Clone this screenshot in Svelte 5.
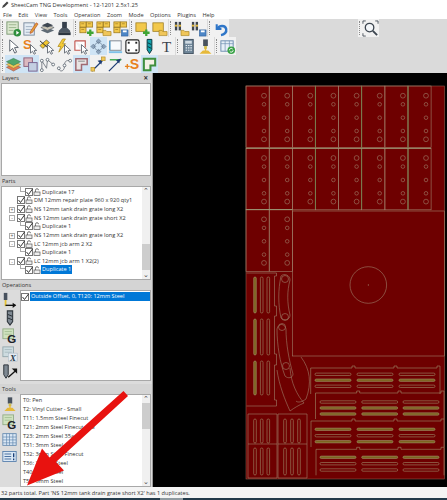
<script>
	const menus = ['File', 'Edit', 'View', 'Tools', 'Operation', 'Zoom', 'Mode', 'Options', 'Plugins', 'Help'];

	const yellow = 'fill="#f2c84b" stroke="#9c7a1c" stroke-width=".8"';
	const grey = 'fill="none" stroke="#7a7f88" stroke-width="1"';
	const cursor = '<path d="M9 7l0 9 2.200-2 1.600 3.200 1.500-.8-1.500-3 2.800-.2z" fill="#fff" stroke="#59616b" stroke-width=".9"/>';
	const plus = '<path d="M13 10v7M9.500 13.500h7" stroke="#3fa535" stroke-width="2.400"/>';
	const folder = '<path d="M8.500 11h3l1 1.200h4.500v4.300h-8.500z" fill="#f0c65a" stroke="#a98422" stroke-width=".7"/>';
	const disk = '<rect x="10" y="10.500" width="7" height="6.500" fill="#4d86c6" stroke="#2a5a94" stroke-width=".6"/><rect x="11.500" y="11" width="4" height="2" fill="#fff"/>';
	const blocks = `<rect x="2" y="2" width="6.500" height="5.500" ${yellow}/><rect x="9" y="2" width="6.500" height="5.500" ${yellow}/><rect x="2" y="8" width="6.500" height="5.500" ${yellow}/><path d="M3.500 4h3M10.500 4h3M3.500 10h3" stroke="#8b6a18" stroke-width=".6"/>`;
	const block = `<rect x="2" y="3" width="11" height="9" ${yellow}/>`;
	const pins = '<rect x="2" y="2" width="2.500" height="9" fill="#3d4550"/><rect x="6" y="2" width="2.500" height="9" fill="#3d4550"/><rect x="2" y="5" width="2.500" height="2" fill="#e2b93d"/><rect x="6" y="5" width="2.500" height="2" fill="#e2b93d"/>';
	const drill = '<rect x="6.500" y="1.500" width="5" height="7" fill="#48525e"/><rect x="7.500" y="8.500" width="3" height="3" fill="#cdbf54"/>';

	const icons = {
		sheetRun: '<rect x="2" y="2" width="12" height="13" fill="#dbe8cf" stroke="#7c9a74"/><path d="M4 5h8M4 8h8M4 11h5" stroke="#9bb58e"/><circle cx="13" cy="13.500" r="4" fill="#2f8f3c"/><path d="M12 11.500l3 2-3 2z" fill="#fff"/>',
		notes: '<rect x="2" y="3" width="11" height="13" fill="#e4ecf4" stroke="#7c8ca0"/><path d="M4 7h7M4 10h7M4 13h5" stroke="#9fb0c2"/><path d="M9 12l6-9 2 1.200-6 9-2.500 1z" fill="#e4a23a" stroke="#b23c20" stroke-width=".6"/>',
		stack: '<path d="M2 11l7-3 7 3-7 3z" fill="#5e6a75"/><path d="M2 8l7-3 7 3-7 3z" fill="#c9c4b4" stroke="#59616b" stroke-width=".7"/><path d="M3 5.500l6-2.500 6 2.500-6 2.500z" fill="#3e4751"/>',
		stamp: '<rect x="6.500" y="2" width="5" height="7" fill="#36404c"/><path d="M6 8.500h6l3 3v1.500h-12v-1.500z" fill="#4c5763"/><rect x="2.500" y="13" width="13" height="3" fill="#2c3540"/>',
		blocksAdd: blocks + plus,
		blocksOpen: blocks + folder,
		blocksSave: blocks + disk,
		blockAdd: block + plus,
		blockOpen: block + folder,
		pinsOpen: pins + folder,
		pinsSave: pins + disk,
		undo: '<path d="M5 4.500v5h5" fill="none" stroke="#2f76c8" stroke-width="2.200"/><path d="M6 9c2-3.500 8-3.500 9 .5.800 3.500-2 6-5.500 6.500" fill="none" stroke="#2f76c8" stroke-width="2.600"/>',
		pointer: '<path d="M5 2v12l3-3 2.300 5 2-1-2.200-4.800 4-.2z" fill="#fff" stroke="#59616b"/>',
		sCursor: '<text x="1" y="12" font-size="14" font-weight="700" fill="#e8821e" font-family="Liberation Sans">S</text>' + cursor,
		strip: '<path d="M1 8l7-6 3 3-7 6z" fill="#f2c62f" stroke="#444" stroke-width=".7"/><path d="M1 3l9 8" stroke="#222"/>' + cursor,
		bolt: '<path d="M7 1l-5 8h3l-2 6 7-9h-3l3-5z" fill="#f4cb36" stroke="#a98416" stroke-width=".7"/>' + cursor,
		rectCursor: '<path d="M2 3h11v7M2 3v10h6" fill="#fff" stroke="#c2574f" stroke-width="1.200"/>' + cursor,
		move: '<g fill="#8fa6bf" stroke="#5b6f86" stroke-width=".6"><path d="M9 1l2.500 2.500-2.500 2.500-2.500-2.500zM9 12l2.500 2.500-2.500 2.500-2.500-2.500zM1 9l2.500-2.500 2.500 2.500-2.500 2.500zM12 9l2.500-2.500 2.500 2.500-2.500 2.500z"/><path d="M6 6l3-1.500 3 1.500 1.500 3-1.500 3-3 1.500-3-1.500-1.500-3z" fill="none"/></g>',
		screen: '<rect x="3" y="3" width="12" height="10" fill="#f7fafc" stroke="#7d8690"/><path d="M2 15h14" stroke="#7fc1e8" stroke-width="2"/><path d="M3 3v10" stroke="#2a98d8"/>',
		frame: '<rect x="2" y="2" width="14" height="14" rx="2" fill="#fff" stroke="#222" stroke-width="1.200"/><g fill="#222"><rect x="4" y="4" width="2" height="2"/><rect x="12" y="4" width="2" height="2"/><rect x="4" y="12" width="2" height="2"/><rect x="12" y="12" width="2" height="2"/></g>',
		cyanDrill: '<path d="M6.500 1.500h5v11l-2.500 4-2.500-4z" fill="#14a3ad" stroke="#07323a" stroke-width="1"/><path d="M7 5l4 2M7 9l4 2" stroke="#07323a"/>',
		letterT: '<text x="9" y="14.500" text-anchor="middle" font-size="16" fill="#3a424c" font-family="Liberation Serif">T</text>',
		calc: '<rect x="4" y="1.500" width="10" height="15" fill="#6f8699" stroke="#3f4f5e"/><rect x="5.500" y="3" width="7" height="3" fill="#cfdae3"/><path d="M6 8h1.500M8.500 8h1.500M11 8h1.500M6 10.500h1.500M8.500 10.500h1.500M11 10.500h1.500M6 13h1.500M8.500 13h1.500M11 13h1.500" stroke="#e6edf2" stroke-width="1.200"/>',
		yellowDrill: drill + '<path d="M9 10v5M4.500 16h9l-2-2h-5z" fill="#e6b93a" stroke="#e6b93a" stroke-width="1.500"/>',
		tableRefresh: '<rect x="2" y="3" width="13" height="11" fill="#e7eff7" stroke="#6c8db0"/><path d="M2 6h13M6.500 3v11M11 3v11" stroke="#6c8db0" stroke-width=".7"/><circle cx="13" cy="13" r="4" fill="#37a144"/><path d="M11 13a2 2 0 0 1 3.500-1.300M15 13a2 2 0 0 1-3.500 1.300" fill="none" stroke="#fff"/>',
		layers: '<path d="M1.500 12l7.500-3.500 7.500 3.500-7.500 4z" fill="#e2794e" stroke="#7c4a3a" stroke-width=".5"/><path d="M1.500 9l7.500-3.500 7.500 3.500-7.500 4z" fill="#ecc75a" stroke="#8a7430" stroke-width=".5"/><path d="M1.500 6l7.500-3.500 7.500 3.500-7.500 4z" fill="#4fa66b" stroke="#2c6e46" stroke-width=".5"/>',
		squares: '<rect x="2" y="2" width="9" height="9" fill="#dcb9c0" stroke="#8f5f78"/><rect x="7" y="7" width="9" height="9" fill="#c4cfe2" stroke="#75618f"/>',
		path1: `<path d="M3 15V5l5 8 1-9 6 5" ${grey}/><g fill="#fff" stroke="#4a5662" stroke-width=".8"><circle cx="3" cy="15" r="1.500"/><circle cx="3" cy="5" r="1.500"/><circle cx="9" cy="4" r="1.500"/><circle cx="15" cy="9" r="1.500"/></g>`,
		path2: `<path d="M3 13c1 5 6 3 6-2s1-7 7-6" ${grey}/><g fill="#fff" stroke="#4a5662" stroke-width=".8"><circle cx="3" cy="13" r="1.500"/><circle cx="9" cy="10" r="1.500"/><circle cx="15" cy="5" r="1.500"/></g>`,
		corner: '<path d="M3 3h12v6h-6v6H3z" fill="#e8e4e4" stroke="#a06a72" stroke-width="1.600"/><path d="M5.500 5.500h7" stroke="#888"/>',
		arrowDot: '<path d="M2 16l11-11" stroke="#1d3d74" stroke-width="1.400"/><path d="M13 4l-1 5-4-4z" fill="#1d3d74"/><rect x="12" y="1" width="4" height="4" fill="#f0c85a" stroke="#a98422" stroke-width=".6"/><rect x="1" y="12" width="4" height="4" fill="#f0c85a" stroke="#a98422" stroke-width=".6"/>',
		slash: '<path d="M2 16l13-13" stroke="#1d3d74" stroke-width="1.300"/><path d="M3 4h12" stroke="#3aa84c" stroke-width="1.500"/><path d="M14 3l-1 5-3.500-3.500z" fill="#1d3d74"/>',
		plusS: '<path d="M1 11h5M3.500 8.500v5" stroke="#e8821e" stroke-width="1.400"/><text x="6" y="14" font-size="15" font-weight="700" fill="#e8821e" font-family="Liberation Sans">S</text>',
		greenCorner: '<path d="M3 3h12v7h-5v5H3z" fill="#f5f0e6" stroke="#3f8f3e" stroke-width="2.200"/>',
		search: '<circle cx="8" cy="8" r="4.500" fill="#f4f7fa" stroke="#3d4650" stroke-width="1.400"/><path d="M11.500 11.500l4.500 4.500" stroke="#3d4650" stroke-width="2"/><path d="M1 4V1h3M14 1h3v3M1 14v3h3" fill="none" stroke="#3d4650" stroke-width=".9"/>'
	};

	const rows = [
		[
			[{ i: 'sheetRun' }, { i: 'notes' }, { i: 'stack' }, { i: 'stamp' }],
			[{ i: 'blocksAdd' }, { i: 'blocksOpen' }, { i: 'blocksSave' }],
			[{ i: 'blockAdd' }, { i: 'blockOpen' }],
			[{ i: 'pinsOpen' }, { i: 'pinsSave' }],
			[{ i: 'undo' }]
		],
		[
			[
				{ i: 'pointer' }, { i: 'sCursor' }, { i: 'strip' }, { i: 'bolt' }, { i: 'rectCursor' },
				{ i: 'move', on: true }, { i: 'screen' }, { i: 'frame' }, { i: 'cyanDrill' }, { i: 'letterT' }
			],
			[{ i: 'calc' }, { i: 'yellowDrill' }],
			[{ i: 'tableRefresh' }]
		],
		[
			[
				{ i: 'layers', on: true }, { i: 'squares', on: true }, { i: 'path1' }, { i: 'path2' },
				{ i: 'corner', on: true }, { i: 'arrowDot' }, { i: 'slash' }, { i: 'plusS' }, { i: 'greenCorner', on: true }
			]
		]
	];

	const parts = [
		{ name: 'Duplicate 17', child: true, last: true },
		{ name: 'DM 12mm repair plate 960 x 920 qty1' },
		{ name: 'NS 12mm tank drain grate long X2', exp: '+' },
		{ name: 'NS 12mm tank drain grate short X2', exp: '-' },
		{ name: 'Duplicate 1', child: true, last: true },
		{ name: 'NS 12mm tank drain grate long X2', exp: '+' },
		{ name: 'LC 12mm jcb arm 2 X2', exp: '-' },
		{ name: 'Duplicate 1', child: true, last: true },
		{ name: 'LC 12mm jcb arm 1 X2(2)', exp: '-' },
		{ name: 'Duplicate 1', child: true, last: true, sel: true }
	];

	const tools = [
		'T0: Pen',
		'T2: Vinyl Cutter - Small',
		'T11: 1.5mm Steel Finecut',
		'T21: 2mm Steel Finecut 45a',
		'T23: 2mm Steel 35a',
		'T31: 3mm Steel',
		'T32: 3mm Steel Finecut',
		'T36: 3.8mm Steel',
		'T40: 4mm Steel',
		'T50: 5mm Steel'
	];

	// sheet layout, in page coordinates (viewBox matches the canvas position)
	const colX = [246, 269.2, 292.3, 315.4, 338.6, 361.7, 384.9, 408, 431.1];
	const holes = [[9.7, 2.4], [18.3, 1.8], [31.7, 1.8], [45, 1.8], [53.3, 2.4]];
	const panels = [];
	for (let c = 0; c < 8; c++) {
		for (const top of [86, 148.3]) panels.push({ x: colX[c], y: top, w: colX[c + 1] - colX[c], h: 61.5 });
	}
	panels.push({ x: 246, y: 209.6, w: 23.2, h: 62 }, { x: 269.2, y: 209.6, w: 23.1, h: 62 });

	const greenCols = [315.4, 361.7, 408];
	const olive = '#7d6420';
	const plain = '#6e0000';
	const slatRows = [
		{ left: 310.7, right: 440, top: 368, ys: [374.3, 380.2, 386.3], xs: [315, 357, 399], fills: [plain, olive, plain] },
		{ left: 315.5, right: 444, top: 393, ys: [402, 408, 414], xs: [320, 361.7, 403], fills: [plain, olive, olive] },
		{ left: 311, right: 444, top: 421, ys: [429.3, 435.7, 441.7], xs: [315, 357, 399], fills: [olive, plain, olive] },
		{ left: 316, right: 444, top: 449.3, ys: [457.3, 463.7, 470], xs: [320, 361.7, 403], fills: [olive, plain, plain] }
	];
	const vSlots = [];
	for (const x of [255, 261.7, 268.3]) {
		for (const [y, h] of [[277, 36], [319, 36], [361, 34], [419, 24], [448, 27]]) {
			vSlots.push({ x, y, h, fill: x === 255 && y < 400 ? olive : plain });
		}
	}
	for (const x of [285, 292, 299]) {
		for (const [y, h] of [[419, 24], [448, 27]]) vSlots.push({ x, y, h, fill: plain });
	}
</script>

{#snippet check()}
	<svg class="mini" viewBox="0 0 8 8" width="8" height="8"><rect x=".5" y=".5" width="7" height="7" fill="#fff" stroke="#777" /><path d="M1.500 4l2 2.500 4-5.500" fill="none" stroke="#222" stroke-width=".9" /></svg>
{/snippet}

{#snippet lock()}
	<svg class="mini" viewBox="0 0 8 8" width="8" height="8"><path d="M2.500 4V2.200a1.500 1.500 0 0 1 3 0" fill="none" stroke="#555" stroke-width=".8" /><rect x="1" y="4" width="6" height="3.500" fill="#eee" stroke="#555" stroke-width=".7" /></svg>
{/snippet}

{#snippet icon(name)}
	<svg viewBox="0 0 18 18" width="17" height="17">{@html icons[name]}</svg>
{/snippet}

<div class="app">
	<div class="title">
		<svg viewBox="0 0 8 8" width="8" height="8"><path d="M1 7l1-2.500 4-4 1.500 1.500-4 4z" fill="#444" /></svg>
		<span>SheetCam TNG Development - 12-1201 2.5x1.25</span>
	</div>
	<div class="menu">
		{#each menus as m}<span>{m}</span>{/each}
	</div>

	<div class="toolbars">
		{#each rows as groups, r}
			<div class="tb-row">
				{#each groups as g}
					<div class="group">
						<i class="grip"></i>
						{#each g as b}
							<span class="btn" class:on={b.on}>{@render icon(b.i)}</span>
						{/each}
					</div>
				{/each}
				{#if r === 0}
					<div class="group search">
						<i class="grip"></i>
						<span class="btn">{@render icon('search')}</span>
					</div>
				{/if}
			</div>
		{/each}
	</div>

	<div class="main">
		<div class="side">
			<div class="pane-head">Layers<b>×</b></div>
			<div class="box layers"></div>

			<div class="pane-head">Parts</div>
			<div class="box parts">
				<div class="rows">
					{#each parts as p}
						<div class="row" class:child={p.child}>
							{#if p.exp}<i class="exp">{p.exp}</i>{/if}
							{#if p.last}<i class="elbow"></i>{/if}
							{@render check()}
							{@render lock()}
							<span class:sel={p.sel}>{p.name}</span>
						</div>
					{/each}
				</div>
				<div class="scroll">
					<span class="up">⌃</span>
					<div class="thumb low"></div>
					<span class="down">⌄</span>
				</div>
			</div>

			<div class="pane-head">Operations</div>
			<div class="split ops">
				<div class="rail">
					<svg viewBox="0 0 18 18" width="16" height="16"><rect x="2" y="1" width="4" height="8" fill="#48525e" /><path d="M4 9v7" stroke="#e6c233" stroke-width="2" /><path d="M4 15h11" stroke="#111" stroke-width="1.500" /><path d="M12 12l4 3-4 3z" fill="#111" /></svg>
					<svg viewBox="0 0 18 18" width="16" height="16"><path d="M6 1h6v12l-3 4-3-4z" fill="#7f8993" stroke="#2d343b" stroke-width="1.200" /><path d="M6.500 5l5 2M6.500 9l5 2" stroke="#1d2329" /></svg>
					<svg viewBox="0 0 18 18" width="16" height="16"><rect x="1" y="1" width="12" height="11" fill="#cfe2bf" stroke="#93ac87" /><path d="M3 4h8M3 7h8" stroke="#a2bd94" /><text x="6" y="17" font-size="13" font-weight="700" fill="#1c2127" font-family="Liberation Sans">G</text></svg>
					<svg viewBox="0 0 18 18" width="16" height="16"><rect x="1" y="1" width="12" height="11" fill="#cddbe0" stroke="#93a7ac" /><path d="M3 4h8M3 7h8" stroke="#a8bac0" /><rect x="7" y="8" width="10" height="9" fill="#e4ebf1" stroke="#9aa9b8" stroke-width=".5" /><text x="9" y="16.500" font-size="10" font-style="italic" font-weight="700" fill="#2b3a4a" font-family="Liberation Serif">X</text></svg>
					<svg viewBox="0 0 18 18" width="16" height="16"><path d="M2 1h5v11l-2.500 4-2.500-4z" fill="#7f8993" stroke="#2d343b" stroke-width="1.100" /><path d="M7 15l9-8" stroke="#111" stroke-width="1.500" /><path d="M11 5h6v6z" fill="#111" /></svg>
				</div>
				<div class="box list">
					<div class="op-row">
						{@render check()}
						<span>Outside Offset, 0, T120: 12mm Steel</span>
					</div>
				</div>
			</div>

			<div class="pane-head tools-head">Tools</div>
			<div class="split tools">
				<div class="rail">
					<svg viewBox="0 0 18 18" width="16" height="16">{@html icons.yellowDrill}</svg>
					<svg viewBox="0 0 18 18" width="16" height="16"><rect x="1" y="1" width="12" height="11" fill="#cfe2bf" stroke="#93ac87" /><path d="M3 4h8M3 7h8" stroke="#a2bd94" /><text x="6" y="17" font-size="13" font-weight="700" fill="#1c2127" font-family="Liberation Sans">G</text></svg>
					<svg viewBox="0 0 18 18" width="15" height="15"><rect x="1" y="2" width="16" height="14" fill="#dbe8f5" stroke="#5f86ad" /><path d="M1 6h16M1 9.500h16M1 13h16M5.500 2v14M9 2v14M13 2v14" stroke="#5f86ad" stroke-width=".8" /></svg>
					<svg viewBox="0 0 18 18" width="15" height="15"><rect x="1" y="3" width="16" height="12" fill="#dbe8f5" stroke="#4f7aa8" /><path d="M3 6h8M3 9h8M3 12h8" stroke="#2f5c92" /><path d="M14 5v5M14 11.500v2" stroke="#1b3f78" stroke-width="1.600" /></svg>
				</div>
				<div class="box list tool-list">
					<div class="rows">
						{#each tools as t}<div class="tool">{t}</div>{/each}
					</div>
					<div class="scroll">
						<span class="up">⌃</span>
						<div class="thumb high"></div>
						<span class="down">⌄</span>
					</div>
				</div>
			</div>
		</div>

		<div class="canvas">
			<svg viewBox="153 73 294 414" width="294" height="414">
				<rect x="246" y="86" width="198.500" height="393" fill="#6e0000" stroke="#8f5a4a" stroke-width=".6" />
				<g fill="none" stroke="#a0806a" stroke-width=".6">
					{#each panels as p}
						<rect x={p.x} y={p.y} width={p.w} height={p.h} />
						{#each holes as [dy, r]}
							<circle cx={p.x + 18} cy={p.y + dy} {r} />
						{/each}
					{/each}
					<rect x="292.300" y="211" width="152" height="145" />
					<circle cx="368.300" cy="285" r="18.300" />
					<circle cx="368.300" cy="285" r=".4" />

					<path d="M246.500 273h30v3h-2v30h2v10h-2v38h2v11h-2v35h2v6h-30" />
					<path d="M281 276c-3 14-3 28 0 42 3 3 9 2 9-3 -3-12-3-24 0-35 0-5-6-7-9-4z" />
					<circle cx="285" cy="279" r="3.500" />
					<circle cx="285" cy="317" r="3.500" />
					<path d="M277 329c0 16 3 34 8 47 3 3 8 2 8-2 -4-14-7-30-7-45 -1-6-8-6-9 0z" />
					<circle cx="282" cy="327" r="3.500" />
					<circle cx="286" cy="366" r="3.500" />
					<path d="M277 370c2 15 8 30 13 41 4-3 9-6 14-8 -7-8-13-20-14-35" />
					<path d="M301 357c9 12 11 26 5 42 -4 3-8 4-10 2" />

					<path d="M248 414h29v64h-29zM278 414h29v64h-29z" />
					<path d="M248 444h29M278 444h29" />
				</g>
				<g fill="none" stroke="#a08c68" stroke-width=".6">
					{#each slatRows as s}
						<path d="M{s.left} {s.top + 26}V{s.top}H{s.xs[1] - 5}v-2h3v2H{s.xs[2] - 5}v-2h3v2H{s.right - 3}v-2h3V{s.top + 26}" />
						{#each s.ys as y, i}
							{#each s.xs as x}
								<rect {x} y={y - 1.200} width="36" height="2.400" rx="1.200" fill={s.fills[i]} />
							{/each}
						{/each}
					{/each}
					{#each vSlots as v}
						<rect x={v.x - 1.300} y={v.y} width="2.600" height={v.h} rx="1.300" fill={v.fill} />
					{/each}
				</g>
				<g stroke="#6a8048" stroke-width=".8">
					{#each greenCols as x}
						<path d="M{x} 86V209" />
					{/each}
					<path d="M246 148.300H431M246 209.600H292" stroke="#9a9e78" />
				</g>
			</svg>
		</div>
	</div>

	<div class="status">32 parts total. Part 'NS 12mm tank drain grate short X2' has 1 duplicates.</div>
	<div class="taskbar"><i></i></div>

	<svg class="red-arrow" viewBox="0 0 447 500" width="447" height="500">
		<path d="M123.500 391l4.500 5-72 66 8 8.500-37 15 15-37 7.500 9z" fill="#e8120f" />
	</svg>
</div>

<style>
	:global(body) {
		margin: 0;
		background: #fff;
	}
	.app {
		position: relative;
		width: 447px;
		height: 500px;
		overflow: hidden;
		display: flex;
		flex-direction: column;
		font-family: 'Open Sans', sans-serif;
		font-size: 5.600px;
		color: #333;
	}
	.title {
		height: 10px;
		display: flex;
		align-items: center;
		gap: 2px;
		padding-left: 1px;
		font-size: 5.700px;
		white-space: nowrap;
	}
	.menu {
		height: 9px;
		display: flex;
		align-items: center;
		gap: 6.500px;
		padding-left: 3px;
		white-space: nowrap;
	}
	.toolbars {
		height: 54px;
		background: #dadada;
		display: flex;
		flex-direction: column;
	}
	.tb-row {
		height: 18px;
		display: flex;
	}
	.group {
		display: flex;
		align-items: center;
		background: #f1f1f1;
		margin-left: 1px;
	}
	.search {
		margin-left: 129px;
	}
	.grip {
		width: 2px;
		height: 14px;
		margin: 0 1px;
		border-left: 1px dotted #8a8a8a;
		box-sizing: border-box;
	}
	.btn {
		width: 17px;
		height: 18px;
		display: flex;
		align-items: center;
		justify-content: center;
	}
	.btn.on {
		background: #cfe4f5;
	}
	.main {
		height: 414px;
		display: flex;
	}
	.side {
		width: 153px;
		flex: none;
		background: #dcdcdc;
		display: flex;
		flex-direction: column;
		border-right: 1px solid #9a9a9a;
		box-sizing: border-box;
	}
	.pane-head {
		height: 10px;
		line-height: 10px;
		padding: 0 2px;
		display: flex;
		justify-content: space-between;
		background: #d4d4d4;
		flex: none;
	}
	.pane-head b {
		font-size: 8px;
		margin-right: 2px;
		color: #333;
	}
	.tools-head {
		margin-top: 3px;
	}
	.box {
		background: #fff;
		border: 1px solid #a8a8a8;
		box-sizing: border-box;
	}
	.layers {
		height: 93px;
		margin: 0 1px;
	}
	.parts {
		height: 94px;
		margin: 0 1px;
		display: flex;
	}
	.rows {
		flex: 1;
		min-width: 0;
		padding-top: 0.5px;
	}
	.mini {
		flex: none;
	}
	.row {
		position: relative;
		height: 8.670px;
		display: flex;
		align-items: center;
		padding-left: 15px;
		white-space: nowrap;
	}
	.row span {
		padding: 0 1px;
		line-height: 8.500px;
	}
	.row.child {
		padding-left: 23px;
	}
	.row .sel {
		background: #0078d7;
		color: #fff;
	}
	.exp {
		position: absolute;
		left: 7px;
		top: 2px;
		width: 4px;
		height: 4px;
		border: 0.5px solid #aaa;
		font-size: 5px;
		line-height: 4px;
		text-align: center;
		font-style: normal;
		color: #555;
	}
	.elbow {
		position: absolute;
		left: 18px;
		top: -1px;
		width: 5px;
		height: 5px;
		border-left: 1px solid #aaa;
		border-bottom: 1px solid #aaa;
		box-sizing: border-box;
	}
	.scroll {
		width: 8px;
		flex: none;
		background: #f0f0f0;
		display: flex;
		flex-direction: column;
		align-items: center;
		font-size: 7px;
		line-height: 8px;
		color: #444;
		font-family: 'DejaVu Sans', sans-serif;
	}
	.up,
	.down {
		height: 8px;
		flex: none;
	}
	.thumb {
		width: 100%;
		height: 26px;
		background: #cdcdcd;
	}
	.thumb.low {
		margin-top: auto;
		margin-bottom: 1px;
	}
	.thumb.high {
		margin-bottom: auto;
	}
	.split {
		display: flex;
		flex: none;
		gap: 1px;
		padding-right: 1px;
	}
	.ops {
		height: 91px;
	}
	.tools {
		height: 93px;
	}
	.rail {
		width: 19px;
		flex: none;
		display: flex;
		flex-direction: column;
		align-items: center;
		gap: 2px;
		padding-top: 2px;
	}
	.list {
		flex: 1;
		min-width: 0;
	}
	.tool-list {
		display: flex;
	}
	.op-row {
		display: flex;
		align-items: center;
		height: 9px;
		margin-top: 1px;
		white-space: nowrap;
	}
	.op-row span {
		flex: 1;
		background: #0078d7;
		color: #fff;
		line-height: 9px;
		margin-left: 1px;
		padding-left: 1px;
	}
	.tool {
		height: 9.080px;
		line-height: 9px;
		padding-left: 2px;
		white-space: nowrap;
	}
	.canvas {
		flex: 1;
		background: #000;
		overflow: hidden;
	}
	.canvas svg {
		display: block;
	}
	.status {
		height: 11px;
		line-height: 12px;
		padding-left: 1px;
		background: #f4f4f4;
		white-space: nowrap;
		overflow: hidden;
	}
	.taskbar {
		height: 2px;
		background: #223a4a;
		display: flex;
		padding-left: 160px;
	}
	.taskbar i {
		width: 23px;
		background: #8f9aa0;
	}
	.red-arrow {
		position: absolute;
		left: 0;
		top: 0;
		pointer-events: none;
	}
</style>
